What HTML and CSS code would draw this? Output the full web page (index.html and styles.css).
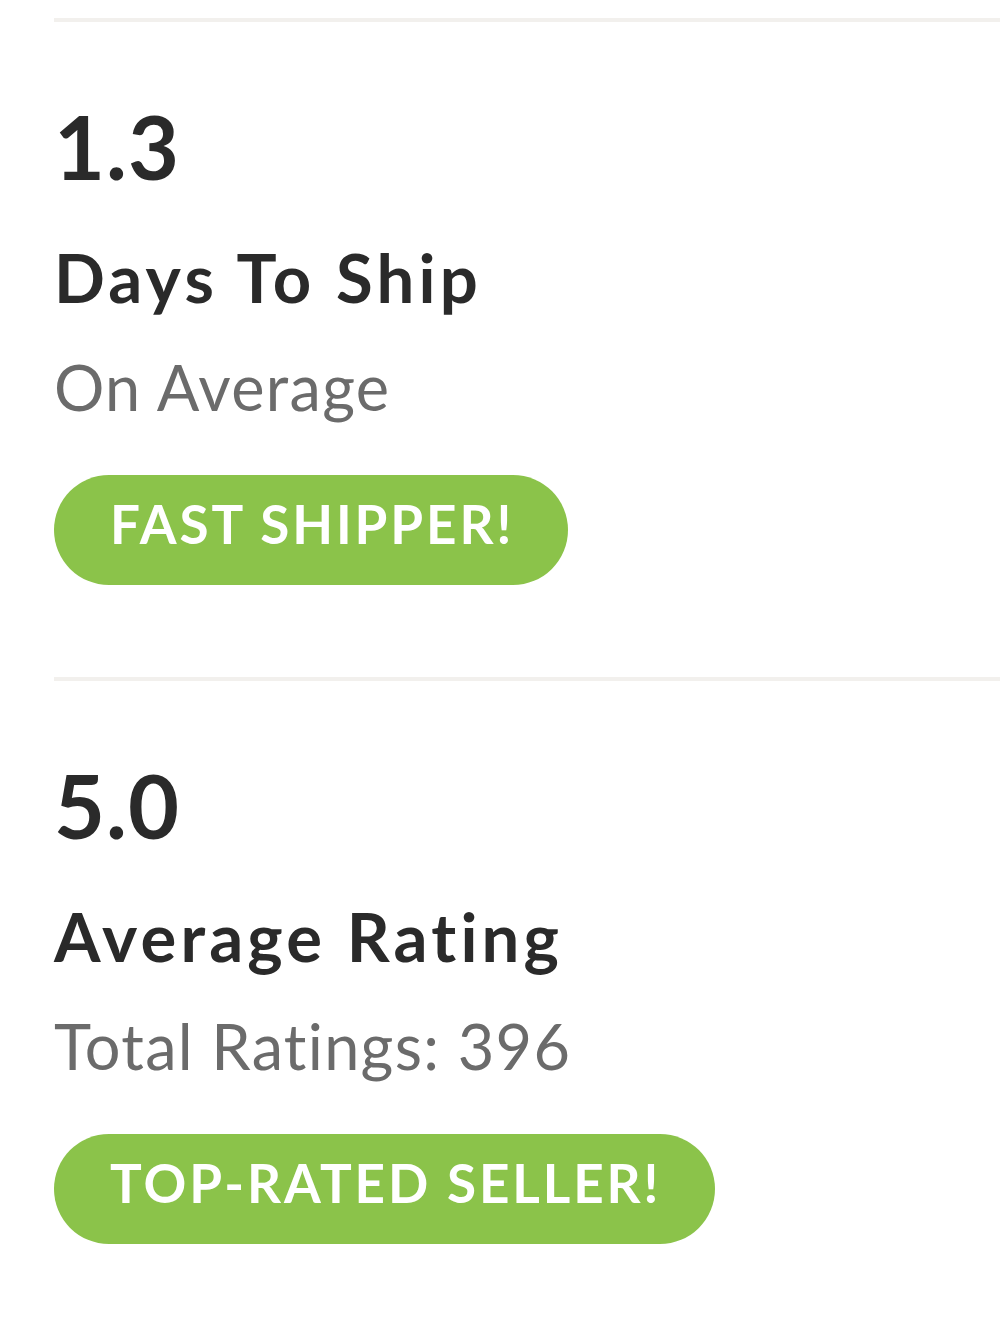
FILE: index.html
```html
<!DOCTYPE html>
<html lang="en">
<head>
    <meta charset="UTF-8">
    <meta name="viewport" content="width=device-width, initial-scale=1.0">
    <title>Seller Stats</title>
    <link rel="stylesheet" href="styles.css">
</head>
<body>
    <div class="stats">
        <div class="stat">
            <div class="stat-value">1.3</div>
            <div class="stat-title">Days To Ship</div>
            <div class="stat-note">On Average</div>
            <span class="badge">FAST SHIPPER!</span>
        </div>

        <div class="stat">
            <div class="stat-value">5.0</div>
            <div class="stat-title">Average Rating</div>
            <div class="stat-note">Total Ratings: 396</div>
            <span class="badge">TOP-RATED SELLER!</span>
        </div>
    </div>
</body>
</html>
```

FILE: styles.css
```css
* {
    margin: 0;
    padding: 0;
    box-sizing: border-box;
}

body {
    font-family: 'Lato', 'Noto Sans', sans-serif;
    font-variant-ligatures: none;
    background: #ffffff;
    color: #2a2a2a;
    padding: 18px 0 0 54px;
}

.stat {
    border-top: 4px solid #f2f0ed;
    padding: 80px 0 92px;
    display: flex;
    flex-direction: column;
    align-items: flex-start;
}

.stat-value {
    font-size: 88px;
    font-weight: 700;
    line-height: 1;
    letter-spacing: 1px;
}

.stat-title {
    font-size: 67px;
    font-weight: 700;
    line-height: 1;
    letter-spacing: 4.2px;
    margin-top: 54px;
}

.stat-note {
    font-size: 63px;
    font-weight: 400;
    line-height: 1;
    letter-spacing: 1.3px;
    color: #6b6b6b;
    margin-top: 44px;
}

.badge {
    display: inline-block;
    margin-top: 57px;
    background: #8bc34a;
    color: #ffffff;
    font-size: 53px;
    font-weight: 700;
    line-height: 1;
    letter-spacing: 2.9px;
    padding: 22px 54px 35px 56px;
    border-radius: 55px;
}
```
